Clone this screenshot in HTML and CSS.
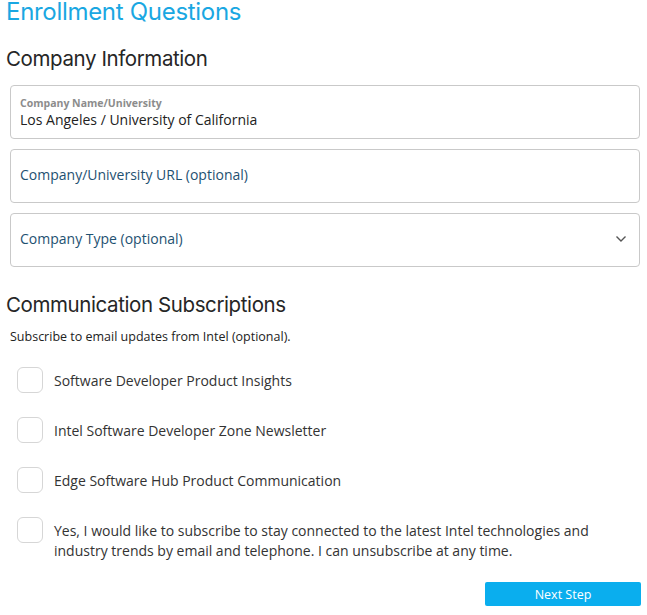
FILE: index.html
```html
<!DOCTYPE html>
<html lang="en">
<head>
<meta charset="utf-8">
<title>Enrollment Questions</title>
<link rel="stylesheet" href="styles.css">
</head>
<body>
<div class="page">
  <h1 class="title">Enrollment Questions</h1>
  <h2 class="section">Company Information</h2>
  <div class="fields">
    <div class="field filled">
      <span class="field-label">Company Name/University</span>
      <span class="field-value">Los Angeles / University of California</span>
    </div>
    <div class="field">
      <span class="placeholder">Company/University URL (optional)</span>
    </div>
    <div class="field select">
      <span class="placeholder">Company Type (optional)</span>
      <svg class="chevron" width="12" height="8" viewBox="0 0 12 8"><path d="M1.5 1.5 L6 6 L10.5 1.5" fill="none" stroke="#555" stroke-width="1.4"/></svg>
    </div>
  </div>
  <h2 class="section section-2">Communication Subscriptions</h2>
  <p class="intro">Subscribe to email updates from Intel (optional).</p>
  <ul class="checks">
    <li class="check"><span class="box"></span><span class="check-label">Software Developer Product Insights</span></li>
    <li class="check"><span class="box"></span><span class="check-label">Intel Software Developer Zone Newsletter</span></li>
    <li class="check"><span class="box"></span><span class="check-label">Edge Software Hub Product Communication</span></li>
    <li class="check"><span class="box"></span><span class="check-label">Yes, I would like to subscribe to stay connected to the latest Intel technologies and industry trends by email and telephone. I can unsubscribe at any time.</span></li>
  </ul>
  <div class="actions">
    <button class="next">Next Step</button>
  </div>
</div>
</body>
</html>
```
FILE: styles.css
```css
html, body {
  margin: 0;
  padding: 0;
  background: #ffffff;
}
body {
  font-family: "Open Sans", "Noto Sans", sans-serif;
  color: #2b2b2b;
}
.page {
  width: 647px;
  height: 615px;
  overflow: hidden;
  box-sizing: border-box;
  padding: 0 6px 0 6px;
}
.title {
  margin: 0;
  font-family: Inter, sans-serif;
  font-weight: 400;
  font-size: 24px;
  line-height: 24px;
  color: #1aa7e2;
  letter-spacing: -0.3px;
}
.section {
  margin: 21px 0 0 0;
  font-family: Inter, sans-serif;
  font-weight: 400;
  font-size: 20.5px;
  line-height: 28px;
  color: #262626;
  letter-spacing: -0.4px;
}
.fields {
  margin: 12px 1px 0 4px;
  display: flex;
  flex-direction: column;
  gap: 10px;
}
.field {
  box-sizing: border-box;
  height: 54px;
  border: 1px solid #c9c9c9;
  border-radius: 4px;
  padding: 0 9px 4px 9px;
  display: flex;
  align-items: center;
  position: relative;
}
.field.filled {
  flex-direction: column;
  align-items: flex-start;
  justify-content: flex-start;
  padding-top: 10px;
}
.field-label {
  font-size: 10.5px;
  font-weight: 700;
  color: #8c8c8c;
  line-height: 14px;
}
.field-value {
  font-size: 14px;
  color: #222;
  line-height: 20px;
}
.placeholder {
  font-size: 14px;
  color: #1e5171;
}
.select {
  justify-content: space-between;
  padding-right: 12px;
}
.chevron {
  margin-top: 2px;
}
.section-2 {
  margin-top: 24px;
}
.intro {
  margin: 10px 0 0 4px;
  font-size: 12.5px;
  line-height: 16px;
  color: #222;
}
.checks {
  list-style: none;
  margin: 22px 0 0 0;
  padding: 0 0 0 11px;
  display: flex;
  flex-direction: column;
  gap: 24px;
}
.check {
  display: flex;
  align-items: flex-start;
  gap: 11px;
}
.box {
  flex: none;
  width: 26px;
  height: 26px;
  box-sizing: border-box;
  border: 1px solid #d6d6d6;
  border-radius: 6px;
  background: #fff;
}
.check-label {
  max-width: 545px;
  font-size: 14px;
  line-height: 20px;
  color: #333;
  padding-top: 4px;
}
.actions {
  display: flex;
  justify-content: flex-end;
  margin: 21px 0 0 0;
}
.next {
  width: 156px;
  height: 24px;
  border: none;
  border-radius: 2px;
  background: #0aaeee;
  color: #fff;
  font-family: "Open Sans", sans-serif;
  font-size: 12.5px;
  cursor: pointer;
}
```
